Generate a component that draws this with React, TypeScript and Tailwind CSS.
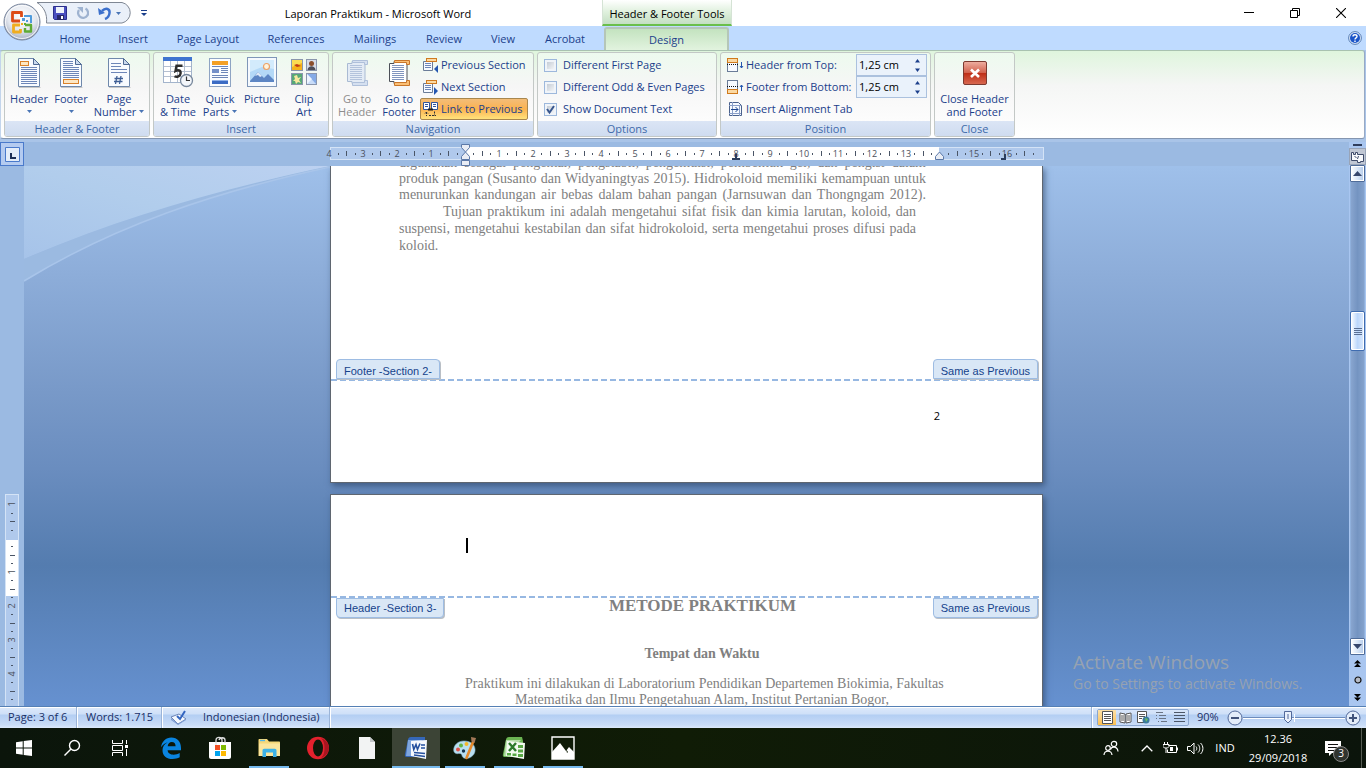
import React from "react";

type Kids = { children?: React.ReactNode };

/* ---------- icons ---------- */

const Sheet = ({ x = 0, y = 0, w = 22, h = 29, fold = 6 }: { x?: number; y?: number; w?: number; h?: number; fold?: number }) => (
  <g>
    <path d={`M${x + 0.5} ${y + 0.5}H${x + w - fold - 0.5}L${x + w - 0.5} ${y + fold + 0.5}V${y + h - 0.5}H${x + 0.5}Z`} fill="#f8fbff" stroke="#6f88ab" />
    <path d={`M${x + w - fold - 0.5} ${y + 0.5}V${y + fold + 0.5}H${x + w - 0.5}Z`} fill="#c9d9ee" stroke="#4f6a94" />
    <path d={`M${x + 1} ${y + h + 0.5}H${x + w + 0.5}`} stroke="#00000030" />
  </g>
);

const Lines = ({ x, w, ys, c = "#6d86b8" }: { x: number; w: number; ys: number[]; c?: string }) => (
  <g stroke={c}>{ys.map((y) => <path key={y} d={`M${x} ${y + 0.5}h${w}`} />)}</g>
);

const HeaderIcon = () => (
  <svg width="24" height="32" viewBox="0 0 24 32" aria-hidden="true">
    <Sheet x={1} y={1} />
    <Lines x={4} w={16} ys={[10, 12, 14, 16, 18, 20, 22, 24, 26]} />
    <rect x="3.500" y="4.500" width="8" height="4" fill="#fde7c4" stroke="#d9822b" />
  </svg>
);
const FooterIcon = () => (
  <svg width="24" height="32" viewBox="0 0 24 32" aria-hidden="true">
    <Sheet x={1} y={1} />
    <Lines x={4} w={10} ys={[4, 6, 8]} />
    <Lines x={4} w={16} ys={[10, 12, 14, 16, 18, 20]} />
    <rect x="4.500" y="22.500" width="15" height="4" fill="#fde7c4" stroke="#d9822b" />
  </svg>
);
const PageNumberIcon = () => (
  <svg width="24" height="32" viewBox="0 0 24 32" aria-hidden="true">
    <Sheet x={1} y={1} />
    <Lines x={4} w={10} ys={[6, 9]} />
    <Lines x={4} w={16} ys={[12, 15]} />
    <path d="M10 19l-1.500 8M14 19l-1.500 8M7.500 21.500h8.500M7 24.500h8.500" stroke="#3f5f96" strokeWidth="1.3" fill="none" />
  </svg>
);
const DateIcon = () => (
  <svg width="32" height="32" viewBox="0 0 32 32" aria-hidden="true">
    <rect x="1.500" y=".5" width="28" height="25" fill="#fff" stroke="#a3b4cc" />
    <rect x="1" y="0" width="29" height="4" fill="#3f74d0" />
    <path d="M8.500 4v21M15.500 4v21M22.500 4v21M2 9.500h27M2 14.500h27M2 19.500h27" stroke="#b5c0d0" />
    <path d="M20.500 8.700H14.500L13.500 14c2.500-1.300 5.500-.8 5.100 2.300-.3 3-3.700 4.200-6.100 3" fill="none" stroke="#2d2d2d" strokeWidth="2.400" />
    <circle cx="24.500" cy="23.500" r="6" fill="#f3f6fa" stroke="#77879c" strokeWidth="1.300" />
    <path d="M24.500 19.500v4h3.500" stroke="#333" fill="none" strokeWidth="1.200" />
  </svg>
);
const QuickPartsIcon = () => (
  <svg width="24" height="32" viewBox="0 0 24 32" aria-hidden="true">
    <rect x="1.500" y="1.500" width="21" height="28" fill="#fbfdff" stroke="#8ea4c3" />
    <rect x="4" y="4" width="16" height="4" fill="#f4a024" />
    <rect x="4" y="12" width="7" height="4" fill="#7590c8" />
    <Lines x={4} w={16} ys={[9, 18, 20]} />
    <Lines x={13} w={7} ys={[11, 13, 15]} />
    <rect x="4" y="23" width="16" height="4" fill="#3c6cc4" />
    <path d="M4 23.500h16" stroke="#8fb1ea" />
  </svg>
);
const PictureIcon = () => (
  <svg width="32" height="32" viewBox="0 0 32 32" aria-hidden="true">
    <rect x="1.500" y=".5" width="29" height="29" fill="#f5f9fe" stroke="#7f96b8" />
    <rect x="4" y="3" width="24" height="22" fill="#b4d9f7" />
    <path d="M4 3h24v9L16 10 4 15z" fill="#d3ebfc" />
    <circle cx="20.500" cy="9.500" r="3" fill="#fff3dc" stroke="#eba067" strokeWidth="1.200" />
    <path d="M4 24l8-9 6 6 4-4 6 6v2H4z" fill="#5d86c4" />
    <path d="M9 19l3-4 4 4-2 1-2-2z" fill="#dfeaf8" />
  </svg>
);
const ClipArtIcon = () => (
  <svg width="32" height="32" viewBox="0 0 32 32" aria-hidden="true">
    <rect x="3.500" y="2.500" width="11" height="11" fill="#f5b21c" stroke="#8a96ad" />
    <path d="M4 3h10v3L4 10z" fill="#fbdc52" /><path d="M6 8l3-1 4 2-4 1z" fill="#c13d14" />
    <rect x="18.500" y="2.500" width="10" height="11" fill="#d7dce6" stroke="#8a96ad" />
    <circle cx="23.500" cy="6.500" r="2.500" fill="#8b4f2c" /><path d="M19.500 13c.5-5 7.500-5 8 0z" fill="#4e4e58" />
    <rect x="3.500" y="16.500" width="11" height="11" fill="#56a878" stroke="#8a96ad" />
    <path d="M9 18l1 3 3-1-2 3 2 3-3-1-2 2-1-3-2 0 2-2-1-3z" fill="#f6e9a0" />
    <rect x="18.500" y="16.500" width="10" height="11" fill="#c9dcf8" stroke="#8a96ad" />
    <path d="M19 17l9 10V17z" fill="#86abe6" /><path d="M19 17l5 5-5 5z" fill="#eef5ff" />
  </svg>
);
const GotoIcon = ({ dim = false }: { dim?: boolean }) => {
  const bar = dim ? "#afc0da" : "#c9762a";
  const fill = dim ? "#d5e0f0" : "#fbbf74";
  const edge = dim ? "#a9bad3" : "#4c5058";
  return (
    <svg width="30" height="32" viewBox="0 0 30 32" aria-hidden="true">
      <path d="M5.500 6.500H10V4.500h13v22H10v-2H5.500z" fill={dim ? "#e3ebf5" : "#fff"} stroke={edge} />
      <Lines x={8} w={12} ys={[8, 10, 12, 14, 16, 18, 20, 22]} c={dim ? "#b3c3dc" : "#8195be"} />
      <path d="M10.500 3.500h15v4h-3v-2h-12z" fill={fill} stroke={bar} />
      <path d="M10.500 25.500h12v-2h3v5h-15z" fill={fill} stroke={bar} />
    </svg>
  );
};
const SectionIcon = ({ next = false }: { next?: boolean }) => (
  <svg width="17" height="16" viewBox="0 0 17 16" aria-hidden="true">
    <path d="M1.500 4.500h9v9h-9z" fill="#f7faff" stroke="#6a7c98" />
    <Lines x={3} w={6} ys={[6, 8, 10]} />
    <rect x="4.500" y="1.500" width="10" height="3" fill="#fbd9a3" stroke="#cf7a20" />
    {next ? <path d="M12 8l4 4-4 4z" fill="#2456b0" /> : <path d="M16 8l-4 4 4 4z" fill="#2456b0" />}
  </svg>
);
const LinkIcon = () => (
  <svg width="17" height="16" viewBox="0 0 17 16" aria-hidden="true">
    <path d="M1.500 1.500h6v7h-6zM9.500 1.500h6v7h-6z" fill="#fff" stroke="#31549c" />
    <path d="M3 3.500h3M3 5.500h3M11 3.500h3M11 5.500h3" stroke="#31549c" />
    <path d="M6 8.500h5" stroke="#222" strokeWidth="2" />
    <path d="M4.500 11v4M3 12.500l1.500-1.500L6 12.500M7 14.500h7M12.500 10.500v4" stroke="#333" strokeDasharray="2 1" fill="none" />
  </svg>
);
const DistanceIcon = ({ bottom = false }: { bottom?: boolean }) => (
  <svg width="18" height="16" viewBox="0 0 18 16" aria-hidden="true">
    <rect x="1.500" y="1.500" width="10" height="13" fill="#f7faff" stroke="#6a7c98" />
    <rect x="1.500" y={bottom ? 10.500 : 1.500} width="10" height="4" fill="#fbd9a3" stroke="#d07a1c" />
    <path d="M1 7.500h12" stroke="#111" strokeDasharray="1 1" />
    <path d={bottom ? "M15.500 12V6M14 8l1.500-2L17 8" : "M15.500 5v6M14 9l1.500 2L17 9"} stroke="#2456b0" fill="none" />
  </svg>
);
const AlignTabIcon = () => (
  <svg width="16" height="16" viewBox="0 0 16 16" aria-hidden="true">
    <path d="M1.500 1.500h9l3 3v10h-12z" fill="#f7faff" stroke="#4a618c" />
    <path d="M4.500 1v14M1 4.500h12M1 12.500h12M11.500 5v10" stroke="#8a9fc8" />
    <path d="M3 8.500h7M7.500 6l2.500 2.500L7.500 11" stroke="#1d4690" fill="none" />
  </svg>
);
const CloseIcon = () => (
  <svg width="26" height="28" viewBox="0 0 26 28" aria-hidden="true">
    <defs>
      <linearGradient id="red" x1="0" y1="0" x2="0" y2="1">
        <stop offset="0" stopColor="#eeb0a2" /><stop offset=".5" stopColor="#d1604c" /><stop offset=".52" stopColor="#bf2f18" /><stop offset="1" stopColor="#d96a52" />
      </linearGradient>
    </defs>
    <rect x="1.500" y="4.500" width="23" height="23" rx="1.500" fill="url(#red)" stroke="#7c3a30" />
    <path d="M9 12.500l8 7.500M17 12.500L9 20" stroke="#fff" strokeWidth="2.600" />
  </svg>
);
const Caret = ({ className = "" }: { className?: string }) => (
  <svg width="5" height="3" viewBox="0 0 5 3" className={className} aria-hidden="true"><path d="M0 0h5L2.500 3z" fill="#4a75b5" /></svg>
);

/* ---------- ribbon ---------- */

const Group = ({ title, width, children }: Kids & { title: string; width: string }) => (
  <section aria-label={title} className={`flex shrink-0 flex-col overflow-hidden rounded-[3px] border border-[#c3c8c6] bg-linear-to-b from-[#edfaee] via-[#f6f6f6] via-40% to-white ${width}`}>
    <div className="flex flex-1 px-[3px]">{children}</div>
    <h2 className="h-[15px] bg-linear-to-b from-[#dbe5f5] to-[#cfdcf0] text-center text-[11px] leading-[15px] text-[#3e6aaa]">{title}</h2>
  </section>
);

const Big = ({ icon, a, b, arrow = "none", width = "w-[42px]", dim = false }: { icon: React.ReactNode; a: string; b?: string; arrow?: "none" | "below" | "inline"; width?: string; dim?: boolean }) => (
  <button type="button" disabled={dim} className={`flex shrink-0 flex-col items-center pt-1 text-[11px] leading-[13px] whitespace-nowrap ${width} ${dim ? "text-[#8d8d8d]" : "text-[#1b3f8b]"}`}>
    <span className="flex h-[35px] items-start justify-center">{icon}</span>
    <span>{a}</span>
    {arrow === "below" && <Caret className="mt-[5px]" />}
    {b && (
      <span className="flex items-center gap-[3px]">{b}{arrow === "inline" && <Caret />}</span>
    )}
  </button>
);

const Small = ({ icon, text, on = false }: { icon: React.ReactNode; text: string; on?: boolean }) => (
  <button type="button" aria-pressed={on} className={`flex h-[22px] items-center gap-[2px] rounded-[2px] border px-px text-[11px] whitespace-nowrap text-[#1b3f8b] ${on ? "border-[#a8874f] bg-linear-to-b from-[#f3bd78] via-[#fbb24f] to-[#ffe27c]" : "border-transparent"}`}>
    {icon}{text}
  </button>
);

const Check = ({ text, checked = false }: { text: string; checked?: boolean }) => (
  <label className="flex h-[22px] items-center gap-[6px] text-[11px] whitespace-nowrap text-[#1b3f8b]">
    <span className="relative flex h-[13px] w-[13px]">
      <input type="checkbox" defaultChecked={checked} className="peer h-[13px] w-[13px] appearance-none border border-[#9db8dc] bg-linear-to-br from-[#b9c2cd] to-white shadow-[inset_0_0_0_2px_#f0f4f9]" />
      <svg viewBox="0 0 13 13" className="pointer-events-none absolute inset-0 hidden h-[13px] w-[13px] peer-checked:block" aria-hidden="true"><path d="M3 6l2.500 3.500L10 3" fill="none" stroke="#38578f" strokeWidth="2" /></svg>
    </span>
    {text}
  </label>
);

const Spin = ({ id, icon, text }: { id: string; icon: React.ReactNode; text: string }) => (
  <div className="flex h-[22px] items-center">
    <label htmlFor={id} className="flex w-[130px] items-center gap-[2px] text-[11px] whitespace-nowrap text-[#1b3f8b]">{icon}{text}</label>
    <div className="flex h-[22px] w-[71px] items-center border border-[#abc1de] bg-[#eaf2fb]">
      <input id={id} defaultValue="1,25 cm" className="w-[58px] bg-transparent pl-[2px] text-[11px] text-black outline-none" />
      <span className="flex flex-col gap-[5px]">
        <button type="button" aria-label="Increase" className="flex"><svg width="5" height="4" viewBox="0 0 5 4"><path d="M0 3.500h5L2.500 0z" fill="#1b3f8b" /></svg></button>
        <button type="button" aria-label="Decrease" className="flex"><svg width="5" height="4" viewBox="0 0 5 4"><path d="M0 .5h5L2.500 4z" fill="#1b3f8b" /></svg></button>
      </span>
    </div>
  </div>
);

const tabs: [string, string][] = [
  ["Home", "w-[58px]"], ["Insert", "w-[58px]"], ["Page Layout", "w-[92px]"], ["References", "w-[84px]"],
  ["Mailings", "w-[74px]"], ["Review", "w-[64px]"], ["View", "w-[54px]"], ["Acrobat", "w-[70px]"],
];

const OfficeButton = () => (
  <svg width="38" height="38" viewBox="0 0 38 38" aria-hidden="true">
    <defs>
      <radialGradient id="orb" cx=".5" cy=".35" r=".65"><stop offset="0" stopColor="#fff" /><stop offset=".6" stopColor="#e3e7ef" /><stop offset="1" stopColor="#a3adbf" /></radialGradient>
    </defs>
    <circle cx="19" cy="19" r="18" fill="url(#orb)" stroke="#76839a" />
    <circle cx="19" cy="19" r="16.500" fill="none" stroke="#fff" strokeOpacity=".8" />
    <g fill="none" strokeWidth="2.800" strokeLinejoin="round">
      <path d="M17 18H9.500V9.500h9V14" stroke="#dd4b16" />
      <path d="M21 13h7v7" stroke="#4f9bdc" strokeWidth="2" />
      <path d="M17 22h-6.500v7h7v-3" stroke="#f0ad1f" />
      <path d="M22 22h6v6.500h-6V25" stroke="#5eab34" strokeWidth="2.400" />
    </g>
    <path d="M19 15h3v3h-3z" fill="#4f9bdc" /><path d="M23 17h2v2h-2z" fill="#4f9bdc" />
    <path d="M18 20h2v2h-2z" fill="#f0ad1f" /><path d="M21 20h2v2h-2z" fill="#5eab34" />
  </svg>
);

const TitleBar = () => (
  <header className="flex h-[26px] bg-white text-[11px] text-black">
    <div className="flex w-[154px] shrink-0">
      <div className="relative ml-9 flex w-[98px] items-center pl-[17px]">
        <svg className="absolute top-[2px] left-0" width="98" height="22" viewBox="0 0 98 22" aria-hidden="true">
          <path d="M1 .5H86a10.500 10.500 0 0 1 0 20.500H10.500C11.500 12 8 5 1 .5z" fill="#eaf0f9" stroke="#7f8794" />
        </svg>
        <button type="button" aria-label="Save" className="relative">
          <svg width="15" height="15" viewBox="0 0 15 15"><path d="M.5.500h13v13H1.500l-1-1z" fill="#4a4fc0" stroke="#2c2f8c" /><path d="M3 1h8v6H3z" fill="#eef2fb" /><path d="M4 9h7v5H4z" fill="#27286a" /><path d="M8 10h2v3H8z" fill="#fff" /></svg>
        </button>
        <button type="button" aria-label="Repeat" disabled className="relative ml-2">
          <svg width="13" height="14" viewBox="0 0 13 14"><path d="M9.500 2.500A5 5 0 1 1 3 4" fill="none" stroke="#9fb3d0" strokeWidth="2.300" /><path d="M1 1h6v6z" fill="#9fb3d0" /></svg>
        </button>
        <button type="button" aria-label="Undo" className="relative ml-[9px]">
          <svg width="14" height="14" viewBox="0 0 14 14"><path d="M4 5c4-4 8-2 7.500 2-.3 3-2 5-4.500 6" fill="none" stroke="#3c70cc" strokeWidth="2.500" /><path d="M0 2l1 7 6-2z" fill="#3c70cc" /></svg>
        </button>
        <Caret className="relative ml-1" />
      </div>
      <button type="button" aria-label="Customize Quick Access Toolbar" className="ml-[7px]">
        <svg width="6" height="6" viewBox="0 0 6 6"><path d="M0 .5h6" stroke="#1b3f8b" /><path d="M0 3h6L3 6z" fill="#1b3f8b" /></svg>
      </button>
    </div>
    <h1 className="w-[448px] shrink-0 text-center leading-7">Laporan Praktikum - Microsoft Word</h1>
    <div className="w-[130px] shrink-0 border-x border-b-2 border-x-[#d5e3d5] border-b-[#6abf4b] bg-linear-to-b from-white via-[#dff0dd] to-[#c4dfc3] text-center leading-7 whitespace-nowrap">Header &amp; Footer Tools</div>
    <div className="mr-[2px] ml-auto flex">
      <button type="button" aria-label="Minimize" className="flex w-[46px] items-center justify-center"><svg width="10" height="10"><path d="M0 4.500h10" stroke="#000" /></svg></button>
      <button type="button" aria-label="Restore" className="flex w-[46px] items-center justify-center"><svg width="10" height="10"><path d="M.5 2.500h7v7h-7zM2.500 2.500v-2h7v7h-2" stroke="#000" fill="none" /></svg></button>
      <button type="button" aria-label="Close" className="flex w-[46px] items-center justify-center"><svg width="10" height="10"><path d="M0 0l10 10M10 0L0 10" stroke="#000" strokeWidth="1.100" /></svg></button>
    </div>
  </header>
);

const Ribbon = () => (
  <div>
    <nav className="flex h-6 bg-[#bfdbff] pl-[46px] text-[11px] text-[#1b3f8b]">
      {tabs.map(([t, w]) => <button type="button" key={t} className={`shrink-0 pt-[2px] whitespace-nowrap ${w}`}>{t}</button>)}
      <button type="button" className="mt-px ml-1 w-[125px] shrink-0 rounded-t-[3px] border-x-2 border-t-2 border-[#b5c6b8] bg-linear-to-b from-[#c3e3bf] to-[#e2f3df] leading-[20px]">Design</button>
      <button type="button" aria-label="Help" className="mr-1 ml-auto">
        <svg width="14" height="14" viewBox="0 0 14 14"><circle cx="7" cy="7" r="6.400" fill="#dbe9fb" stroke="#5a7fb4" /><circle cx="7" cy="7" r="5" fill="#1c55c8" /><path d="M5 5.500c0-2.300 4-2.300 4 0C9 7 7 6.800 7 8.500M7 9.500V11" fill="none" stroke="#fff" strokeWidth="1.400" /></svg>
      </button>
    </nav>
    <div className="bg-[#a9c4e8] pb-[3px]">
      <div className="mr-px flex h-[89px] gap-[3px] rounded-[3px] border border-t-[#a9c2b0] border-r-[#98a9c4] border-b-[#8596b0] border-l-[#c3d5ec] bg-linear-to-b from-[#dff5dd] via-[#f5f6f5] via-40% to-white px-[3px] pt-px pb-px">
        <Group title="Header & Footer" width="w-[146px]">
          <Big icon={<HeaderIcon />} a="Header" arrow="below" />
          <Big icon={<FooterIcon />} a="Footer" arrow="below" />
          <Big icon={<PageNumberIcon />} a="Page" b="Number" arrow="inline" width="w-[54px]" />
        </Group>
        <Group title="Insert" width="w-[176px]">
          <Big icon={<DateIcon />} a="Date" b="& Time" />
          <Big icon={<QuickPartsIcon />} a="Quick" b="Parts" arrow="inline" />
          <Big icon={<PictureIcon />} a="Picture" />
          <Big icon={<ClipArtIcon />} a="Clip" b="Art" />
        </Group>
        <Group title="Navigation" width="w-[202px]">
          <Big icon={<GotoIcon dim />} a="Go to" b="Header" dim />
          <Big icon={<GotoIcon />} a="Go to" b="Footer" />
          <div className="flex flex-col pt-px">
            <Small icon={<SectionIcon />} text="Previous Section" />
            <Small icon={<SectionIcon next />} text="Next Section" />
            <Small icon={<LinkIcon />} text="Link to Previous" on />
          </div>
        </Group>
        <Group title="Options" width="w-[180px]">
          <div className="flex flex-col pt-px pl-[3px]">
            <Check text="Different First Page" />
            <Check text="Different Odd & Even Pages" />
            <Check text="Show Document Text" checked />
          </div>
        </Group>
        <Group title="Position" width="w-[211px]">
          <div className="flex flex-col pt-px pl-[2px]">
            <Spin id="top" icon={<DistanceIcon />} text="Header from Top:" />
            <Spin id="bottom" icon={<DistanceIcon bottom />} text="Footer from Bottom:" />
            <Small icon={<AlignTabIcon />} text="Insert Alignment Tab" />
          </div>
        </Group>
        <Group title="Close" width="w-[81px]">
          <Big icon={<CloseIcon />} a="Close Header" b="and Footer" width="w-[73px]" />
        </Group>
      </div>
    </div>
  </div>
);

/* ---------- rulers ---------- */

const CM = 33.9;

const HorizontalRuler = () => {
  const zero = 135;
  const quarters = Array.from({ length: 83 }, (_, i) => i - 15);
  return (
    <svg width="713" height="24" viewBox="0 0 713 24" className="mx-auto shrink-0 overflow-visible" role="img" aria-label="Horizontal ruler">
      <rect x=".5" y="5.500" width="713" height="12" fill="#b0c9ec" stroke="#d4e3f6" />
      <rect x="135" y="5" width="474" height="13" fill="#fff" />
      {quarters.map((q) => {
        const x = Math.round(zero + (q * CM) / 4);
        if (q === 0 || q === 56 || x > 708) return null;
        if (q % 4 === 0) return null;
        return <path key={q} d={q % 2 === 0 ? `M${x + 0.5} 9v5` : `M${x + 0.5} 11v2`} stroke="#4a5566" />;
      })}
      {Array.from({ length: 21 }, (_, i) => i - 4).filter((n) => n !== 0 && n !== 14).map((n) => (
        <text key={n} x={Math.round(zero + n * CM)} y="15" textAnchor="middle" fontSize="9" fill="#4a4f5a">{Math.abs(n)}</text>
      ))}
      <path d="M131.500 2.500h8v3l-4 4.500 4 4.500v3h-8v-3l4-4.500-4-4.500z" fill="#e9edf5" stroke="#5c79a8" />
      <path d="M131.500 18.500h8v5h-8z" fill="#e9edf5" stroke="#5c79a8" />
      <path d="M605.500 17.500v-3l4-4.500 4 4.500v3z" fill="#e9edf5" stroke="#5c79a8" />
      <path d="M402 17h8M406 12v5M671 17h5M675 12v6" stroke="#2b3d5c" strokeWidth="2" />
    </svg>
  );
};

const VerticalRuler = () => {
  const zero = 44;
  return (
    <svg width="14" height="420" viewBox="0 0 14 420" className="mx-auto mt-[328px] shrink-0" role="img" aria-label="Vertical ruler">
      <rect x=".5" y=".5" width="13" height="419" fill="#b0c9ec" stroke="#d4e3f6" />
      <rect x="1" y="46" width="12" height="56" fill="#fff" />
      {Array.from({ length: 46 }, (_, i) => i - 4).map((q) => {
        const y = Math.round(zero + (q * CM) / 4);
        if (q % 4 === 0) return null;
        return <path key={q} d={q % 2 === 0 ? `M5 ${y + 0.5}h5` : `M6 ${y + 0.5}h2`} stroke="#4a5566" />;
      })}
      {[-1, 1, 2, 3, 4, 5].map((n) => {
        const y = Math.round(zero + n * CM);
        return <text key={n} x="7" y={y + 3} textAnchor="middle" fontSize="9" fill="#4a4f5a" transform={`rotate(-90 7 ${y})`}>{Math.abs(n)}</text>;
      })}
    </svg>
  );
};

/* ---------- document ---------- */

const Tag = ({ children, foot = false }: Kids & { foot?: boolean }) => (
  <span className={`block h-5 border border-[#9dbce3] bg-[#d9e7f6] font-['Liberation_Sans',sans-serif] text-[11px] whitespace-nowrap text-[#15428b] shadow-[1px_1px_0_#b9bfc6] ${foot ? "rounded-t-[4px] px-[7px] leading-[22px]" : "rounded-b-[4px] px-[7px] leading-[19px]"}`}>{children}</span>
);
const Dashes = () => <div className="h-[2px] bg-[repeating-linear-gradient(90deg,#97b8e2_0_6px,#fff_6px_9px)]" />;

const Pages = () => (
  <div className="relative flex w-[713px] flex-col gap-[11px]">
    <article className="h-[317px] shrink-0 border border-t-0 border-[#5f6670] bg-white text-[#808080] shadow-[2px_3px_6px_#28406099]">
      <div className="-mt-[11px] pl-[68px] font-['Liberation_Serif',serif] text-[14px] whitespace-nowrap">
        <p className="w-[527px] text-justify leading-4 [text-align-last:justify]">
          digunakan sebagai pengental, pengstabil, pengemulsi, pembentuk gel, dan pengisi dalam<br />
          produk pangan (Susanto dan Widyaningtyas 2015). Hidrokoloid memiliki kemampuan untuk<br />
          menurunkan kandungan air bebas dalam bahan pangan (Jarnsuwan dan Thongngam 2012).
        </p>
        <p className="w-[517px] text-justify indent-11 leading-[17px] [text-align-last:justify]">
          Tujuan praktikum ini adalah mengetahui sifat fisik dan kimia larutan, koloid, dan<br />
          suspensi, mengetahui kestabilan dan sifat hidrokoloid, serta mengetahui proses difusi pada<br />
          koloid.
        </p>
      </div>
      <div className="mt-[105px] flex justify-between pr-1 pl-[5px]">
        <Tag foot>Footer -Section 2-</Tag>
        <Tag foot>Same as Previous</Tag>
      </div>
      <Dashes />
      <p className="pt-[27px] pr-[102px] text-right text-[11px] leading-4 text-black">2</p>
    </article>
    <article className="h-[600px] shrink-0 border border-[#5f6670] bg-white text-[#808080] shadow-[2px_3px_6px_#28406099]">
      <div className="h-[101px] pt-[43px] pl-[135px]"><div className="h-[15px] w-[2px] bg-black" /></div>
      <Dashes />
      <div className="flex justify-between pr-1 pl-[5px]">
        <Tag>Header -Section 3-</Tag>
        <h2 className="ml-7 font-['Liberation_Serif',serif] text-[17px] leading-4 font-bold">METODE PRAKTIKUM</h2>
        <Tag>Same as Previous</Tag>
      </div>
      <div className="pr-[103px] pl-[134px] text-center font-['Liberation_Serif',serif] text-[14px] leading-4">
        <h3 className="mt-7 font-bold">Tempat dan Waktu</h3>
        <p className="mt-[14px] whitespace-nowrap">
          Praktikum ini dilakukan di Laboratorium Pendidikan Departemen Biokimia, Fakultas<br />
          Matematika dan Ilmu Pengetahuan Alam, Institut Pertanian Bogor,
        </p>
      </div>
    </article>
  </div>
);

const ScrollBtn = ({ down = false }: { down?: boolean }) => (
  <button type="button" aria-label={down ? "Scroll down" : "Scroll up"} className="mx-auto flex h-[17px] w-[15px] items-center justify-center rounded-[1px] border border-[#4f6c99] bg-linear-to-r from-white via-[#d9e6f7] to-[#b4cbea] shadow-[inset_0_0_0_1px_#fff]">
    <svg width="9" height="5" viewBox="0 0 9 5"><path d={down ? "M0 0h9L4.500 5z" : "M0 5h9L4.500 0z"} fill="#35456b" /></svg>
  </button>
);

const ScrollColumn = () => (
  <aside className="flex w-[17px] shrink-0 flex-col bg-[#a9c6f0]">
    <div className="mx-auto mt-[2px] h-[2px] w-[9px] shrink-0 bg-[#2f3d5c]" />
    <button type="button" aria-label="View ruler" className="mt-[2px] flex h-[17px] shrink-0 items-center justify-center border border-[#98a4b8] bg-[#c0c7d4]">
      <svg width="13" height="12" viewBox="0 0 13 12"><path d="M.5 1.500h2v2h2v-2h2v2h6v7h-3v1h-3v-2h-6z" fill="#f7f9fc" stroke="#3f4b6a" /><path d="M3.500 5l2 2M6.500 8l1-3" stroke="#3f4b6a" /></svg>
    </button>
    <ScrollBtn />
    <div className="mx-auto flex w-[15px] flex-1 flex-col border-x border-[#8fb0dc] bg-linear-to-r from-[#88a5cf] via-[#7494c1] to-[#84a2cd]">
      <div className="mx-[-1px] mt-[129px] flex h-10 flex-col items-center justify-center gap-px rounded-[2px] border border-[#3f6cb0] bg-linear-to-r from-white via-[#bcd7fb] to-[#dceafd] shadow-[inset_0_0_0_1px_#fff]">
        {[0, 1, 2, 3].map((i) => <i key={i} className="h-px w-2 bg-[#5b6f92]" />)}
      </div>
    </div>
    <ScrollBtn down />
    <div className="flex h-[51px] shrink-0 flex-col items-center justify-around">
      <button type="button" aria-label="Previous page"><svg width="7" height="7" className="block"><path d="M0 3.500L3.500 0 7 3.500zM0 7l3.500-3.500L7 7z" fill="#000" /></svg></button>
      <button type="button" aria-label="Select browse object"><svg width="8" height="8" className="block"><circle cx="4" cy="4" r="3" fill="#b7bcc6" stroke="#111" strokeWidth="1.200" /></svg></button>
      <button type="button" aria-label="Next page"><svg width="7" height="7" className="block"><path d="M0 0h7L3.500 3.500zM0 3.500h7L3.500 7z" fill="#000" /></svg></button>
    </div>
  </aside>
);

const Workspace = () => (
  <main className="flex min-h-0 flex-1">
    <div className="flex min-w-0 flex-1 flex-col">
      <div className="flex h-6 shrink-0 bg-[#9bbae2]">
        <button type="button" aria-label="Tab selector" className="flex w-6 items-center justify-center border border-[#4a7acb] bg-[#b4cbf0]">
          <svg width="15" height="15" viewBox="0 0 15 15"><path d="M.5.500h14v14H.5z" fill="#e4edf9" stroke="#4a7acb" /><path d="M6 6v5h5" fill="none" stroke="#1c2f55" strokeWidth="2" /></svg>
        </button>
        <div className="flex flex-1"><HorizontalRuler /></div>
      </div>
      <div className="flex min-h-0 flex-1">
        <div className="flex w-6 shrink-0 flex-col overflow-hidden bg-[#9bbae2]"><VerticalRuler /></div>
        <div className="relative flex flex-1 justify-center overflow-hidden bg-[linear-gradient(180deg,#9fc0ea_0%,#8dadd9_20%,#7899c8_42%,#6a8dbf_56%,#547caf_74%,#6691d0_100%)]">
          <svg className="absolute top-0 left-0" width="308" height="118" viewBox="0 0 308 118" aria-hidden="true">
            <defs><linearGradient id="sky" x1="0" y1="1" x2="1" y2="0"><stop offset="0" stopColor="#a6c3e9" /><stop offset=".5" stopColor="#b1cdec" /><stop offset="1" stopColor="#bcd1f1" /></linearGradient></defs>
            <path d="M0 93C100 50 200 22 306 0V1C190 26 90 60 0 115z" fill="#9bbae1" />
            <path d="M0 0H306C200 22 100 50 0 93z" fill="url(#sky)" />
            <path d="M306 1C190 26 90 60 0 115" fill="none" stroke="#a9c5ea" strokeWidth="1.500" />
          </svg>
          <Pages />
          <div className="pointer-events-none absolute right-10 bottom-3 w-[236px] whitespace-nowrap text-[#96a2b1]">
            <p className="text-[19px] leading-6">Activate Windows</p>
            <p className="text-[14px] leading-5">Go to Settings to activate Windows.</p>
          </div>
        </div>
      </div>
    </div>
    <ScrollColumn />
  </main>
);

/* ---------- status bar ---------- */

const cell = "flex h-full items-center border-r border-[#9bb4d8] shadow-[1px_0_0_#fff]";

const ViewBtn = ({ label, on = false, children }: Kids & { label: string; on?: boolean }) => (
  <button type="button" aria-label={label} aria-pressed={on} className={`flex w-[18px] items-center justify-center ${on ? "bg-linear-to-b from-[#fbe0a8] to-[#fcc04e]" : ""}`}>
    <svg width="13" height="13" viewBox="0 0 13 13">{children}</svg>
  </button>
);

const ZoomBtn = ({ plus = false }: { plus?: boolean }) => (
  <button type="button" aria-label={plus ? "Zoom in" : "Zoom out"}>
    <svg width="16" height="16" viewBox="0 0 16 16" className="block"><circle cx="8" cy="8" r="7" fill="#e3ecf9" stroke="#52699a" /><path d={plus ? "M4 8h8M8 4v8" : "M4 8h8"} stroke="#42537a" strokeWidth="2" /></svg>
  </button>
);

const StatusBar = () => (
  <footer className="flex h-[22px] shrink-0 items-stretch border-t border-[#5580b5] bg-[linear-gradient(180deg,#fff_0_1px,#dbe8fa_1px,#cfe0f8_7px,#b3cef3_8px,#c9dcf7_18px,#dce9fb_21px)] text-[11px] text-[#1a2f66]">
    <div className={`${cell} w-[77px] pl-2`}>Page: 3 of 6</div>
    <div className={`${cell} w-[85px] pl-[9px]`}>Words: 1.715</div>
    <div className={`${cell} w-[168px] gap-[15px] pl-2`}>
      <svg width="18" height="16" viewBox="0 0 18 16" aria-hidden="true"><path d="M1 7l8-3 7 5-8 5z" fill="#f5f8fd" stroke="#6d86b8" /><path d="M1 8v2l7 5 8-5V9l-8 5z" fill="#7f9ed4" /><path d="M7 6l3 3 5-8" fill="none" stroke="#3365c0" strokeWidth="2" /></svg>
      Indonesian (Indonesia)
    </div>
    <div className={`${cell} flex-1`} />
    <div className="flex w-[274px] items-center pl-[5px]">
      <div className="flex h-[17px] rounded-[2px] border border-[#8aa6d0]">
        <ViewBtn label="Print Layout" on><path d="M1.500.500h10v12h-10z" fill="#fff" stroke="#555" /><path d="M3 3.500h7M3 5.500h7M3 7.500h7M3 9.500h7" stroke="#555" /></ViewBtn>
        <ViewBtn label="Full Screen Reading"><path d="M1 2l5 1v9l-5-1zM12 2L7 3v9l5-1z" fill="#fff" stroke="#555" /><path d="M2 5h3M2 7h3M2 9h3M8 5h3M8 7h3M8 9h3" stroke="#555" /></ViewBtn>
        <ViewBtn label="Web Layout"><path d="M.5.500h9v11h-9z" fill="#fff" stroke="#555" /><path d="M2 3.500h6M2 5.500h6M2 7.500h3" stroke="#555" /><circle cx="9" cy="9" r="3.500" fill="#3a7a9c" /><path d="M8 7l3 1-2 3z" fill="#6ec05a" /></ViewBtn>
        <ViewBtn label="Outline"><path d="M1 1.500h7M4 4.500h7M4 7.500h7M6 10.500h6M1 4.500h1M1 7.500h1M3 10.500h1" stroke="#6a7484" /></ViewBtn>
        <ViewBtn label="Draft"><path d="M1 1.500h11M1 4.500h11M1 7.500h11M1 10.500h11" stroke="#4c5768" /></ViewBtn>
      </div>
      <button type="button" className="ml-2 w-[30px] text-left">90%</button>
      <ZoomBtn />
      <label className="relative block h-4 flex-1">
        <span className="sr-only">Zoom</span>
        <svg width="100%" height="16" viewBox="0 0 102 16" preserveAspectRatio="none" className="block" aria-hidden="true">
          <path d="M0 7.500h102" stroke="#6d8cbc" /><path d="M0 8.500h102M51.500 4v8" stroke="#fff" />
          <path d="M41.500 1.500h7v8L45 13l-3.500-3.500z" fill="#e9f0fb" stroke="#52699a" /><path d="M45 4v5" stroke="#52699a" />
        </svg>
        <input type="range" min="10" max="190" defaultValue="90" className="absolute inset-0 h-4 w-full opacity-0" />
      </label>
      <ZoomBtn plus />
      <span className="w-[5px]" />
    </div>
  </footer>
);

/* ---------- taskbar ---------- */

const Task = ({ label, run = "none", children }: Kids & { label: string; run?: "none" | "open" | "active" }) => (
  <button type="button" aria-label={label} className={`relative flex h-10 w-12 items-center justify-center ${run === "active" ? "bg-[#3c4436]" : ""}`}>
    <svg width="24" height="24" viewBox="0 0 24 24">{children}</svg>
    {run !== "none" && <span className={`absolute bottom-0 h-[2px] bg-[#76b9ed] ${run === "active" ? "w-12" : "w-10"}`} />}
  </button>
);

const Taskbar = () => (
  <nav aria-label="Taskbar" className="flex h-10 shrink-0 items-center bg-linear-to-r from-[#0b150b] via-[#101c06] to-[#0b140b] text-[11px] text-white">
    <div className="flex">
      <Task label="Start"><path d="M4 6.300l6.700-1v6.200H4zM11.700 5.100L20 4v7.500h-8.300zM4 12.500h6.700v6.200l-6.700-1zM11.700 12.500H20V20l-8.300-1.100z" fill="#fff" /></Task>
      <Task label="Search"><circle cx="14.500" cy="9.500" r="5" fill="none" stroke="#fff" strokeWidth="1.400" /><path d="M11 13l-6.500 6.500" stroke="#fff" strokeWidth="1.400" /></Task>
      <Task label="Task View"><path d="M4.500 4v3.500h10V4M4.500 20v-3.500h10V20M4.500 9.500h10v5h-10zM18.500 4v4M18.500 13v7" fill="none" stroke="#fff" /><path d="M17 9h3v3h-3z" fill="#fff" /></Task>
    </div>
    <div className="ml-[3px] flex gap-px">
      <Task label="Edge"><path d="M2 11.300C2.700 5.500 7 1.500 12.300 1.500c6.200 0 9.700 4.500 9.700 10.500v2.300H8.600c.2 3 2.900 4.400 5.900 4.400 2.300 0 4.300-.5 6.200-1.600v4.200c-2 1.100-4.500 1.700-7.200 1.700-6 0-10-3.400-10-8.800 0-3.600 1.900-6.500 5.300-8C6.300 6.900 3.700 8.400 2 11.300zM8.700 10.200h7.900c0-2.800-1.400-4.300-3.800-4.300s-3.800 1.600-4.100 4.300z" fill="#0a84e0" /></Task>
      <Task label="Store"><path d="M1 6h22v15c0 1-1 2-2 2H3c-1 0-2-1-2-2z" fill="#fff" /><path d="M8 9V4c0-3.500 6-3.500 6 0v2M11 4c1-3 6-3 6 0v3" fill="none" stroke="#ddd" strokeWidth="1.300" /><path d="M7 9h5v5H7z" fill="#f25022" /><path d="M13 9h5v5h-5z" fill="#7fba00" /><path d="M7 15h5v5H7z" fill="#00a4ef" /><path d="M13 15h5v5h-5z" fill="#ffb900" /></Task>
      <Task label="File Explorer" run="open"><path d="M1.500 4c0-.6.400-1 1-1H10l2 2.500h10c.6 0 1 .4 1 1V20H1.500z" fill="#f5d779" /><path d="M2 7.500h21V20H2z" fill="#fbe59d" /><path d="M3 4.500h5" stroke="#53b6e6" strokeWidth="1.300" /><path d="M5.500 21v-6.500c0-1 .7-1.700 1.700-1.700h10.600c1 0 1.700.7 1.700 1.700V21H16v-4.500H9V21z" fill="#3db2e8" /></Task>
      <Task label="Opera"><ellipse cx="12" cy="12" rx="11" ry="11.300" fill="#e3212d" /><ellipse cx="12" cy="12" rx="5" ry="8.500" fill="#0e1809" /><path d="M15 2c6 2 8 7 8 10s-2 8-8 10c3-3 3.500-6 3.500-10S18 5 15 2z" fill="#a91520" /></Task>
      <Task label="Document"><path d="M4 1h11l5 5v17H4z" fill="#f2f3f3" /><path d="M15 1v5h5z" fill="#c3c6c8" /></Task>
      <Task label="Word" run="active"><path d="M4 3.500C4.500 2 5 1 7 1h14v20H3C1 21 .5 20 1 18z" fill="#3567b8" /><path d="M4 4h14l-2 3H7v13H2z" fill="#7fa6dd" /><path d="M7 5l16-1-1 19-15-3z" fill="#f6f9fd" /><path d="M8.500 8l1.300 5.500 2.200-5 1.500 5 2.500-6" fill="none" stroke="#24509e" strokeWidth="1.600" /><path d="M17 9h4M17 12h4M10 16.500l11 1M10 19l11 1.500" stroke="#24509e" strokeWidth="1.400" /></Task>
      <Task label="Paint" run="open"><path d="M11 5C5 5 .7 9 .7 14c0 3.500 3 4 5 3.500 2-.4 3 .5 3.300 2 .5 3 4 3.500 7 2.500 4-1.500 6.500-5 6-9C21.500 8 17 5 11 5z" fill="#b9dff0" stroke="#88b6cc" strokeWidth=".6" /><circle cx="5" cy="13.500" r="2" fill="#e0524a" /><circle cx="8" cy="9.500" r="2" fill="#63b545" /><circle cx="13.500" cy="8" r="2" fill="#f4b92c" /><circle cx="10.500" cy="15" r="1.700" fill="#16344d" /><path d="M20 6l-6.500 16" stroke="#e58a2c" strokeWidth="2.600" strokeLinecap="round" /><path d="M18 1l5 1-1.500 5-3-1.500z" fill="#a47958" /></Task>
      <Task label="Excel" run="open"><path d="M4 3.500C4.500 2 5 1 7 1h13l1 4v16H3C1 21 .5 20 1 18z" fill="#6bb452" /><path d="M4 4h15l-3 3H6L4 20H2z" fill="#b6dda8" /><path d="M5 5l18 2-1 16-18-3z" fill="#f3faf0" /><path d="M7 7l7 8M14 7l-7 8" stroke="#2d7a2b" strokeWidth="2.400" /><path d="M16 9h5v3h-5zM16 13.500h5v3h-5zM5 17h4v2.500H5zM10.500 17.500h4V20h-4zM16 18h5v3h-5z" fill="#58a844" /></Task>
      <Task label="Photos" run="open"><path d="M1 1h22v22H1z" fill="none" stroke="#fff" strokeWidth="1.400" /><path d="M1 16l8-9 6 8 3-4 5 5v7H1z" fill="#fff" /><path d="M15 13l2 3-1 1z" fill="#101c06" /></Task>
    </div>
    <div className="ml-auto flex h-full items-center">
      <button type="button" aria-label="People" className="w-9"><svg width="16" height="16" viewBox="0 0 16 16" className="mx-auto" fill="none" stroke="#fff" strokeWidth="1.200"><circle cx="11" cy="4" r="2.700" /><path d="M7.500 9.500c1-3.500 7-3.500 7.500 2" /><circle cx="5" cy="8" r="2.300" /><path d="M1 15c.3-5 7.500-5 8 0" /></svg></button>
      <button type="button" aria-label="Show hidden icons" className="w-9"><svg width="12" height="7" viewBox="0 0 12 7" className="mx-auto"><path d="M.7 6.300L6 1l5.300 5.300" fill="none" stroke="#fff" strokeWidth="1.300" /></svg></button>
      <button type="button" aria-label="Battery" className="w-3"><svg width="16" height="12" viewBox="0 0 16 12" className="-ml-[2px] max-w-none"><path d="M5.500 3.500h8v7h-9v-3M14.500 5.500v3M1.500 0v2M4.500 0v2M0 2.500h6v2L4.500 6h-3L0 4.500zM3 6v5" fill="none" stroke="#fff" /><path d="M7 5h3v4H7z" fill="#fff" /></svg></button>
      <button type="button" aria-label="Volume" className="w-9"><svg width="17" height="13" viewBox="0 0 17 13" className="mx-auto" fill="none" stroke="#fff"><path d="M.5 4.500h3L7 1v11L3.500 8.500h-3zM9 4.500c1 1 1 3 0 4M11 2.500c2.300 2 2.300 6 0 8M13.500 1c3.200 3 3.200 8 0 11" /></svg></button>
      <button type="button" className="w-6 text-center">IND</button>
      <time className="w-[82px] text-center leading-[19px]">12.36<br />29/09/2018</time>
      <button type="button" aria-label="Notifications" className="relative w-[42px]">
        <svg width="16" height="17" viewBox="0 0 16 17" className="ml-[6px]"><path d="M0 1h16v12h-9l-3 3v-3H0z" fill="#fff" /><path d="M3 4.500h10M3 7.500h10M3 10.500h7" stroke="#111" /></svg>
        <span className="absolute top-[6px] left-[14px] flex h-4 w-4 items-center justify-center rounded-full border border-[#888] bg-[#30342f] text-[10px]">3</span>
      </button>
      <span className="mr-1 h-full w-px bg-[#555b52]" />
    </div>
  </nav>
);

export default function App() {
  return (
    <div className="relative flex h-screen flex-col overflow-hidden font-['Open_Sans','Noto_Sans',sans-serif]">
      <TitleBar />
      <button type="button" aria-label="Office Button" className="absolute top-[3px] left-[3px] z-10"><OfficeButton /></button>
      <Ribbon />
      <Workspace />
      <StatusBar />
      <Taskbar />
    </div>
  );
}
